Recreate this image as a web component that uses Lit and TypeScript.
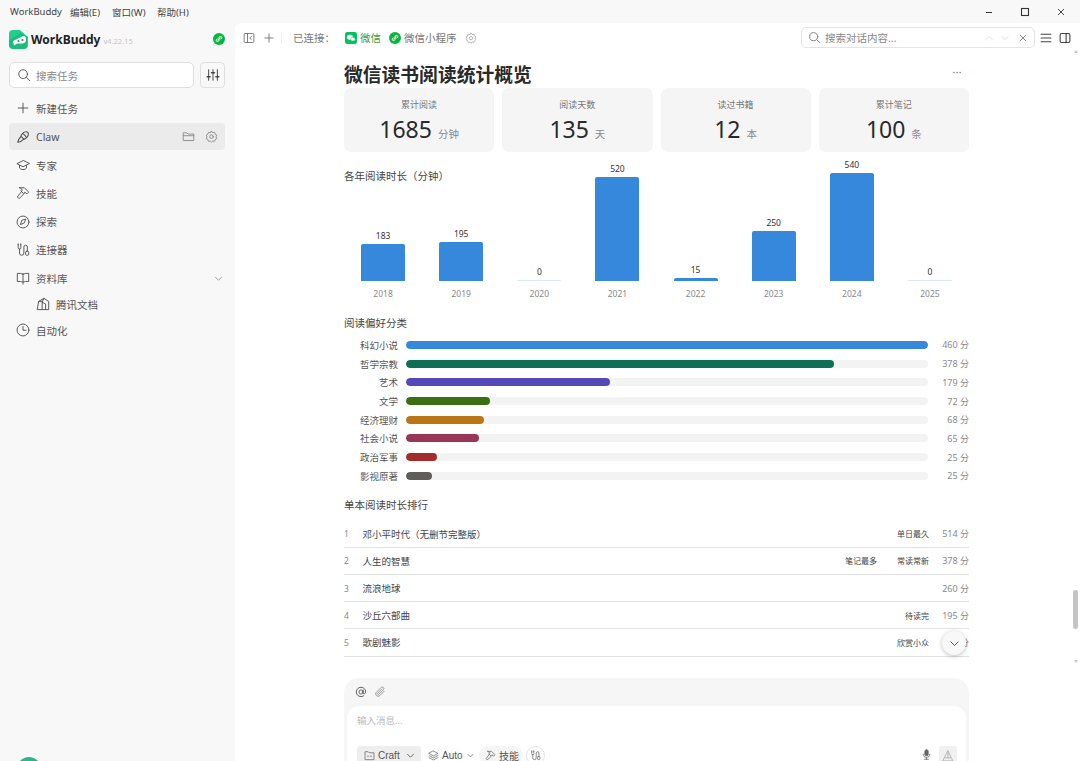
import { LitElement, html, css, svg } from 'lit';
import { customElement } from 'lit/decorators.js';

const icon = (body: unknown, cls = 'ic') => html`<svg class=${cls} viewBox="0 0 16 16" fill="none" stroke="currentColor" stroke-width="1.1" stroke-linecap="round" stroke-linejoin="round">${body}</svg>`;

const icons = {
	search: svg`<circle cx="7" cy="7" r="5"/><path d="M10.8 10.8 14.5 14.5"/>`,
	filter: svg`<path d="M3 2v12M8 2v12M13 2v12"/><path d="M1.3 10h3.4M6.3 5.5h3.4M11.3 10h3.4" stroke-width="1.6"/>`,
	plus: svg`<path d="M8 2.5v11M2.5 8h11"/>`,
	claw: svg`<path d="M2 14l1-3 2.500-3.500C6 5 8.500 2 11.500 2c2 0 3 1.500 2.500 3.500-.5 2.500-3.500 4.500-6 5.500L5 13.500z" stroke-width="1.300"/><path d="M6 7.500l3 3M8.500 4.500l3 3" stroke-width="1.300"/>`,
	folder: svg`<path d="M1.500 12.500v-9h4.500l1.500 1.500h7v7.500z"/><path d="M1.500 7h13"/>`,
	gear: svg`<path d="M8 1.500l1.500 1.800 2.300-.3.700 2.200 2 1.200-1 2.100 1 2-2 1.200-.7 2.200-2.300-.3L8 15l-1.500-1.400-2.300.3-.7-2.200-2-1.200 1-2-1-2.100 2-1.200.7-2.200 2.300.3z"/><circle cx="8" cy="8.200" r="2.200"/>`,
	cap: svg`<path d="M8 3 1 6.500 8 10l7-3.500z"/><path d="M4 8.500v3c1 1.200 2.500 1.700 4 1.700s3-.5 4-1.700v-3"/>`,
	hammer: svg`<path d="M4 2h5.500l5 5-2 2-2.500-2-1.500 1.500-3-3L7 4c-1-.8-2-1.300-3-2z"/><path d="M7 5.500 1.500 12.500l2 2 6-6"/>`,
	compass: svg`<circle cx="8" cy="8" r="6.800"/><path d="M11 5 9.500 9 5 11l1.500-4.500z"/>`,
	plug: svg`<path d="M2.500 2v3.500a1.500 1.500 0 0 0 3 0V2M4 7v4.500a2.500 2.500 0 0 0 5 0v-7a2 2 0 0 1 4 0V9"/><rect x="11" y="9.500" width="3.500" height="4.500" rx="1"/><path d="M2.500 1v1M5.500 1v1"/>`,
	book: svg`<path d="M8 3.500c-1.500-.7-4-1-6.500-.8V12c2.500-.2 5 0 6.500.7 1.500-.7 4-.9 6.500-.7V2.700C12 2.500 9.500 2.800 8 3.500zM8 3.500V15"/>`,
	chevron: svg`<path d="M3.500 6 8 10.500 12.500 6"/>`,
	doc: svg`<path d="M1.500 14 3 5l6-3.500L14.500 5v9zM9 1.500 7 6v8M3 5h4M7 6l4 2v6"/>`,
	clock: svg`<circle cx="8" cy="8" r="6.800"/><path d="M8 4v4.300h3.500"/>`,
	panel: svg`<rect x="1.500" y="2" width="13" height="12" rx="1.500"/><path d="M6 2v12M11 6 9 8l2 2"/>`,
	close: svg`<path d="M3.500 3.500l9 9M12.500 3.500l-9 9"/>`,
	up: svg`<path d="M3 10.500 8 5.500l5 5"/>`,
	menu: svg`<path d="M1.500 3h13M1.500 8h13M1.500 13h13" stroke-width="1.500"/>`,
	side: svg`<rect x="1.500" y="2" width="13" height="12" rx="2" stroke-width="1.500"/><path d="M9.500 2v12" stroke-width="1.500"/>`,
	at: svg`<circle cx="8" cy="8" r="2.800" stroke-width="1.200"/><path d="M10.800 5.500V9c0 2 3.500 2 3.500-1a6.300 6.300 0 1 0-2.500 5" stroke-width="1.200"/>`,
	clip: svg`<path d="M13.500 7 7.500 13a3.200 3.200 0 0 1-4.500-4.500l6.500-6.500a2.100 2.100 0 0 1 3 3L6.500 11a1 1 0 0 1-1.500-1.500L10.500 4"/>`,
	craft: svg`<path d="M1.500 13.500v-11h4.500l1.500 1.500h7v9.500z"/><path d="M5 9h1.500M9 9h2"/>`,
	layers: svg`<path d="M8 1.500 14.500 5 8 8.500 1.500 5zM1.500 8 8 11.500 14.500 8M1.500 11 8 14.500 14.500 11"/>`,
	mic: svg`<rect x="5.500" y="1" width="5" height="9" rx="2.500" fill="currentColor"/><path d="M3 7.500a5 5 0 0 0 10 0M8 12.500V15M5 15h6"/>`,
	send: svg`<path d="M8 1.500 14.500 14.500H1.500zM8 1.500v9M4.500 10.500h7"/>`,
};

const LINK = svg`<path d="M6.500 9.500c1.500 0 1.500-1.500 1.500-3 0-1.300 1-2 2-2s1.800.8 1.800 1.800-.7 1.500-1.300 1.700M9.500 6.500C8 6.500 8 8 8 9.500c0 1.300-1 2-2 2s-1.800-.8-1.800-1.800.7-1.500 1.300-1.700" stroke="#fff" stroke-width="1.300" fill="none" stroke-linecap="round"/>`;
const miniProgram = html`<svg class="badge" viewBox="0 0 16 16"><circle cx="8" cy="8" r="8" fill="#07b53f"/>${LINK}</svg>`;

const years = [
	{ y: 2018, v: 183 }, { y: 2019, v: 195 }, { y: 2020, v: 0 }, { y: 2021, v: 520 },
	{ y: 2022, v: 15 }, { y: 2023, v: 250 }, { y: 2024, v: 540 }, { y: 2025, v: 0 },
];

const cats = [
	{ n: '科幻小说', v: 460, p: 100, c: '#3688dd' },
	{ n: '哲学宗教', v: 378, p: 82, c: '#0f6e56' },
	{ n: '艺术', v: 179, p: 39, c: '#534ab7' },
	{ n: '文学', v: 72, p: 16, c: '#3b6d11' },
	{ n: '经济理财', v: 68, p: 15, c: '#b97516' },
	{ n: '社会小说', v: 65, p: 14, c: '#993556' },
	{ n: '政治军事', v: 25, p: 6, c: '#a32d2d' },
	{ n: '影视原著', v: 25, p: 5, c: '#5f5e5a' },
];

const books = [
	{ t: '邓小平时代（无删节完整版）', tags: ['单日最久'], v: 514 },
	{ t: '人生的智慧', tags: ['笔记最多', '常读常新'], v: 378 },
	{ t: '流浪地球', tags: [], v: 260 },
	{ t: '沙丘六部曲', tags: ['待读完'], v: 195 },
	{ t: '歌剧魅影', tags: ['欣赏小众'], v: 130 },
];

const nav = [
	{ i: icons.cap, t: '专家' },
	{ i: icons.hammer, t: '技能' },
	{ i: icons.compass, t: '探索' },
	{ i: icons.plug, t: '连接器' },
];

@customElement('app-root')
export default class AppRoot extends LitElement {
	static get styles() {
		return css`
			:host {
				display: flex;
				flex-direction: column;
				width: 1080px;
				height: 761px;
				overflow: hidden;
				position: relative;
				background: #f8f8f8;
				color: #333;
				font-family: "Noto Sans", "Noto Sans CJK SC", sans-serif;
				font-size: 10px;
			}

			svg { flex: none; display: block; }
			.ic { width: 14px; height: 14px; color: #555; }
			.ic-s { width: 11px; height: 11px; color: #888; }
			.badge { width: 12px; height: 12px; }

			.titlebar {
				height: 23px;
				flex: none;
				display: flex;
				align-items: center;
				color: #444;
				font-size: 9.5px;
				padding-left: 10px;
			}
			.titlebar .menu { width: 42px; white-space: nowrap; }
			.titlebar .menu.first { width: 60px; }
			.titlebar .menu.third { width: 45px; }
			.titlebar .menu.last { width: auto; }
			.winctl { margin-left: auto; display: flex; padding-right: 14px; gap: 26px; }
			.winctl svg { width: 10px; height: 10px; color: #333; }

			.body { flex: 1; display: flex; min-height: 0; }

			.side { width: 235px; flex: none; padding: 0 10px 0 9px; box-sizing: border-box; position: relative; }
			.brand { display: flex; align-items: center; height: 32px; }
			.logo { width: 19px; height: 19px; margin-right: 3px; }
			.brand b { font-size: 12px; font-weight: 700; color: #222; }
			.ver { font-size: 7.500px; color: #c4c4c4; margin: 3px 0 0 3px; }
			.brand .badge { margin-left: auto; }

			.find { display: flex; gap: 6px; margin-top: 7px; }
			.find .box {
				flex: 1;
				height: 26px;
				box-sizing: border-box;
				border: 1px solid #dfdfdf;
				border-radius: 5px;
				background: #fff;
				display: flex;
				align-items: center;
				padding-left: 7px;
				gap: 5px;
				color: #888;
				font-size: 10.500px;
			}
			.find .btn {
				width: 25px;
				height: 26px;
				box-sizing: border-box;
				border: 1px solid #dfdfdf;
				border-radius: 4px;
				display: grid;
				place-items: center;
			}
			.find .btn .ic { color: #444; }

			.item {
				height: 28.200px;
				display: flex;
				align-items: center;
				gap: 6px;
				padding-left: 7px;
				font-size: 10.500px;
				color: #555;
			}
			.item.new { margin-top: 6px; }
			.item.active {
				height: 27px;
				margin: 1px 0;
				background: #ebebeb;
				border-radius: 4px;
				padding-right: 7px;
			}
			.item.active .tools { margin-left: auto; display: flex; gap: 10px; }
			.item.active .tools .ic { width: 13px; height: 13px; color: #888; }
			.item.sub { height: 24px; padding-left: 27px; gap: 6px; }
			.item .more { margin-left: auto; margin-right: 1px; }
			.avatar {
				position: absolute;
				left: 17px;
				top: 734px;
				width: 24px;
				height: 24px;
				border-radius: 50%;
				background: #2bb58f;
			}

			.main {
				flex: 1;
				background: #fff;
				border-top-left-radius: 6px;
				display: flex;
				flex-direction: column;
				min-width: 0;
			}

			.toolbar {
				height: 29px;
				flex: none;
				display: flex;
				align-items: center;
				padding-left: 8px;
				color: #777;
				font-size: 10.500px;
			}
			.toolbar .ic { width: 12px; height: 12px; color: #666; }
			.toolbar .gap { width: 8px; }
			.sep { width: 1px; height: 12px; background: #eee; margin: 0 11px 0 6px; }
			.link { display: flex; align-items: center; gap: 3px; margin-left: 10px; }
			.link.wx { color: #3f9a4c; }
			.link + .link { margin-left: 8px; }
			.toolbar .gear { margin-left: 8px; color: #aaa; }
			.toolbar .gear .ic { color: #aaa; }
			.search {
				margin-left: auto;
				width: 234px;
				height: 21px;
				box-sizing: border-box;
				border: 1px solid #e4e4e4;
				border-radius: 5px;
				display: flex;
				align-items: center;
				padding: 0 6px;
				gap: 4px;
				color: #888;
			}
			.search .ic { width: 13px; height: 13px; color: #777; }
			.search .ctl { margin-left: auto; display: flex; gap: 6px; }
			.search .ctl svg { width: 10px; height: 10px; color: #ccc; }
			.search .ctl svg:last-child { color: #555; margin-left: 2px; }
			.tools-r { display: flex; gap: 7px; margin: 0 9px 0 5px; }
			.tools-r .ic { color: #444; }

			.content { padding: 0 111px 0 109px; flex: 1; min-height: 0; position: relative; }

			.head { height: 36px; display: flex; align-items: center; justify-content: space-between; padding-top: 10px; box-sizing: border-box; }
			.head h1 { margin: 0; font-size: 18.800px; font-weight: 700; color: #2a2a2a; line-height: 26px; }
			.head .dots { margin: 0 7px 6px 0; color: #666; font-size: 10px; letter-spacing: 0.500px; line-height: 10px; }

			.cards { display: grid; grid-template-columns: repeat(4, 1fr); gap: 8px; }
			.card {
				height: 64px;
				background: #f5f5f5;
				border-radius: 7px;
				display: flex;
				flex-direction: column;
				align-items: center;
				padding-top: 10px;
				box-sizing: border-box;
			}
			.card .k { font-size: 9px; color: #777; line-height: 14px; }
			.card .v { display: flex; align-items: baseline; gap: 6px; margin-top: 1px; font-size: 23px; line-height: 32px; color: #2a2a2a; }
			.card .v small { font-size: 10.500px; color: #888; }

			.chart-wrap { display: grid; margin-top: 6px; height: 142px; }
			.chart-wrap > * { grid-area: 1 / 1; }
			.sec { font-size: 10.500px; line-height: 16px; color: #444; }
			.chart-wrap .sec { margin-top: 10px; }
			.chart { display: flex; align-items: flex-end; }
			.col { flex: 1; display: flex; flex-direction: column; align-items: center; }
			.col .val { font-size: 8.500px; line-height: 12px; margin-bottom: 2.500px; color: #333; }
			.col .bar { width: 44px; background: #3688dd; border-radius: 2px 2px 0 0; }
			.col .bar.zero { background: #d7e7f8; }
			.col .year { font-size: 8.500px; line-height: 12px; margin-top: 7px; color: #888; }

			.cats { margin-top: 15px; }
			.rows { margin-top: 4.600px; }
			.row { height: 18.700px; display: flex; align-items: center; font-size: 9.500px; color: #555; }
			.row .n { width: 54px; text-align: right; margin-right: 8px; }
			.row .track { flex: 1; height: 8px; border-radius: 4px; background: #f3f3f3; overflow: hidden; }
			.row .fill { height: 100%; border-radius: 4px; }
			.row .num { width: 41px; text-align: right; color: #888; font-size: 9px; }

			.rank { margin-top: 12px; }
			.list { margin-top: 7.500px; }
			.book {
				height: 27.200px;
				box-sizing: border-box;
				border-bottom: 1px solid #e2e2e2;
				display: flex;
				align-items: center;
				font-size: 9.500px;
				color: #444;
			}
			.book .idx { width: 18.500px; font-size: 8.500px; color: #888; }
			.book .tag { font-size: 8px; color: #444; margin-left: 20px; }
			.book .tags { margin-left: auto; display: flex; }
			.book .num { width: 40px; text-align: right; color: #888; font-size: 9px; white-space: nowrap; }
			.scroll-down {
				position: absolute;
				right: 114px;
				top: 579px;
				width: 24px;
				height: 24px;
				border-radius: 50%;
				background: #f8f8f8;
				box-shadow: 0 1px 4px rgba(0, 0, 0, .25);
				display: grid;
				place-items: center;
			}
			.scroll-down .ic { width: 13px; height: 13px; color: #444; }

			.composer {
				margin-top: 21.500px;
				background: #f6f6f6;
				border-radius: 15px 15px 0 0;
				padding: 0 3px;
			}
			.composer .top { height: 28px; display: flex; align-items: center; gap: 7px; padding-left: 8px; }
			.composer .top .ic { width: 12px; height: 12px; color: #555; }
			.composer .top .ic + .ic { color: #888; }
			.input { background: #fff; border-radius: 12px 12px 0 0; padding: 8px 9px 0 10px; height: 60px; box-sizing: border-box; }
			.input .ph { font-size: 9.500px; line-height: 14px; color: #bbb; }
			.actions { display: flex; align-items: flex-start; margin-top: 18px; color: #555; font-size: 9.500px; }
			.actions .ic { width: 11px; height: 11px; color: #666; }
			.pill { height: 18px; display: flex; align-items: center; gap: 3px; box-sizing: border-box; font-family: "Liberation Sans", "Noto Sans CJK SC", sans-serif; font-size: 10px; }
			.pill.craft { width: 64px; background: #eee; border-radius: 3px; padding-left: 7px; }
			.pill.auto { margin-left: 7px; width: 44px; }
			.pill.skill { margin-left: 7px; width: 44px; background: #f5f5f5; border-radius: 9px; padding-left: 6px; }
			.pill.conn { margin-left: 3px; width: 19px; border: 1px solid #e4e4e4; border-radius: 50%; height: 19px; justify-content: center; }
			.pill .ic.down { width: 9px; height: 9px; color: #444; }
			.pill.craft .ic.down { width: 11px; height: 11px; margin-left: 2px; }
			.actions .mic { margin-left: auto; margin-right: 7px; margin-top: 3px; }
			.actions .send { width: 18px; height: 20px; background: #f0f0f0; border-radius: 3px; display: grid; place-items: center; }
			.actions .send .ic { color: #aaa; width: 12px; height: 12px; }

			.scrollbar {
				position: absolute;
				right: 2px;
				top: 50px;
				width: 5px;
				height: 613px;
				display: flex;
				flex-direction: column;
				justify-content: space-between;
				align-items: center;
			}
			.scrollbar .arrow { width: 0; height: 0; border-left: 2.500px solid transparent; border-right: 2.500px solid transparent; }
			.scrollbar .arrow.u { border-bottom: 3px solid #c8c8c8; }
			.scrollbar .arrow.d { border-top: 3px solid #c8c8c8; }
			.scrollbar .thumb {
				position: absolute;
				top: 540px;
				width: 5px;
				height: 39px;
				border-radius: 3px;
				background: #c4c4c4;
			}
		`;
	}

	render() {
		return html`
			<div class="titlebar">
				<span class="menu first">WorkBuddy</span>
				<span class="menu">编辑(E)</span>
				<span class="menu third">窗口(W)</span>
				<span class="menu last">帮助(H)</span>
				<div class="winctl">
					<svg viewBox="0 0 10 10" fill="none" stroke="currentColor"><path d="M2 5.500h6"/></svg>
					<svg viewBox="0 0 10 10" fill="none" stroke="currentColor"><rect x="1.500" y="1.500" width="7" height="7" stroke-width="1.100"/></svg>
					<svg viewBox="0 0 10 10" fill="none" stroke="currentColor" stroke-width=".9"><path d="M2 2l6 6M8 2l-6 6"/></svg>
				</div>
			</div>
			<div class="body">
				${this.renderSide()}
				<div class="main">
					${this.renderToolbar()}
					<div class="content">
						<div class="head"><h1>微信读书阅读统计概览</h1><span class="dots">···</span></div>
						${this.renderCards()}
						${this.renderChart()}
						${this.renderCats()}
						${this.renderRank()}
						${this.renderComposer()}
						<div class="scroll-down">${icon(icons.chevron)}</div>
					</div>
				</div>
			</div>
			<div class="scrollbar">
				<span class="arrow u"></span>
				<span class="thumb"></span>
				<span class="arrow d"></span>
			</div>
		`;
	}

	renderSide() {
		return html`
			<div class="side">
				<div class="brand">
					<svg class="logo" viewBox="0 0 19 19">
						<rect width="19" height="19" rx="4" fill="#22cf8a"/>
						<path d="M11 0h4a4 4 0 0 1 4 4v3z" fill="#fff"/>
						<path d="M0 10 12 3l6 4v8a4 4 0 0 1-4 4H5a5 5 0 0 1-5-5z" fill="#1bbd7e"/>
						<path d="M4 11l9-4.500c2-1 4 0 4 2v2c0 2-2 3-4 3H8l-3 2z" fill="#fff"/>
						<circle cx="9.500" cy="11" r="1.100" fill="#159a68"/><circle cx="13.500" cy="10" r="1.100" fill="#159a68"/>
					</svg>
					<b>WorkBuddy</b><span class="ver">v4.22.15</span>
					${miniProgram}
				</div>
				<div class="find">
					<div class="box">${icon(icons.search)}搜索任务</div>
					<div class="btn">${icon(icons.filter)}</div>
				</div>
				<div class="item new">${icon(icons.plus)}新建任务</div>
				<div class="item active">
					${icon(icons.claw)}Claw
					<span class="tools">${icon(icons.folder)}${icon(icons.gear)}</span>
				</div>
				${nav.map(n => html`<div class="item">${icon(n.i)}${n.t}</div>`)}
				<div class="item">${icon(icons.book)}资料库<span class="more">${icon(icons.chevron, 'ic-s')}</span></div>
				<div class="item sub">${icon(icons.doc)}腾讯文档</div>
				<div class="item">${icon(icons.clock)}自动化</div>
				<div class="avatar"></div>
			</div>
		`;
	}

	renderToolbar() {
		return html`
			<div class="toolbar">
				${icon(icons.panel)}<span class="gap"></span>${icon(icons.plus)}
				<span class="sep"></span>
				已连接：
				<span class="link wx">
					<svg class="badge" viewBox="0 0 16 16">
						<rect width="16" height="16" rx="3" fill="#07c160"/>
						<ellipse cx="6.500" cy="7" rx="4" ry="3.300" fill="#fff"/>
						<ellipse cx="10.500" cy="9.500" rx="3" ry="2.500" fill="#fff" stroke="#07c160" stroke-width=".6"/>
					</svg>
					微信
				</span>
				<span class="link">${miniProgram}微信小程序</span>
				<span class="gear">${icon(icons.gear)}</span>
				<div class="search">
					${icon(icons.search)}搜索对话内容...
					<span class="ctl">${icon(icons.up)}${icon(icons.chevron)}${icon(icons.close)}</span>
				</div>
				<div class="tools-r">${icon(icons.menu)}${icon(icons.side)}</div>
			</div>
		`;
	}

	renderCards() {
		const stats = [
			{ k: '累计阅读', v: 1685, u: '分钟' },
			{ k: '阅读天数', v: 135, u: '天' },
			{ k: '读过书籍', v: 12, u: '本' },
			{ k: '累计笔记', v: 100, u: '条' },
		];
		return html`
			<div class="cards">
				${stats.map(s => html`
					<div class="card">
						<span class="k">${s.k}</span>
						<span class="v">${s.v}<small>${s.u}</small></span>
					</div>
				`)}
			</div>
		`;
	}

	renderChart() {
		return html`
			<div class="chart-wrap">
				<div class="sec">各年阅读时长（分钟）</div>
				<div class="chart">
					${years.map(d => html`
						<div class="col">
							<span class="val">${d.v}</span>
							<div class="bar ${d.v ? '' : 'zero'}" style="height:${Math.max(1, d.v * 0.2)}px"></div>
							<span class="year">${d.y}</span>
						</div>
					`)}
				</div>
			</div>
		`;
	}

	renderCats() {
		return html`
			<div class="cats">
				<div class="sec">阅读偏好分类</div>
				<div class="rows">
					${cats.map(c => html`
						<div class="row">
							<span class="n">${c.n}</span>
							<div class="track"><div class="fill" style="width:${c.p}%;background:${c.c}"></div></div>
							<span class="num">${c.v} 分</span>
						</div>
					`)}
				</div>
			</div>
		`;
	}

	renderRank() {
		return html`
			<div class="rank">
				<div class="sec">单本阅读时长排行</div>
				<div class="list">
					${books.map((b, i) => html`
						<div class="book">
							<span class="idx">${i + 1}</span>
							<span>${b.t}</span>
							<span class="tags">${b.tags.map(t => html`<span class="tag">${t}</span>`)}</span>
							<span class="num">${b.v} 分</span>
						</div>
					`)}
				</div>
			</div>
		`;
	}

	renderComposer() {
		return html`
			<div class="composer">
				<div class="top">${icon(icons.at)}${icon(icons.clip)}</div>
				<div class="input">
					<div class="ph">输入消息...</div>
					<div class="actions">
						<span class="pill craft">${icon(icons.craft)}Craft${icon(icons.chevron, 'ic down')}</span>
						<span class="pill auto">${icon(icons.layers)}Auto${icon(icons.chevron, 'ic down')}</span>
						<span class="pill skill">${icon(icons.hammer)}技能</span>
						<span class="pill conn">${icon(icons.plug)}</span>
						<span class="mic">${icon(icons.mic)}</span>
						<span class="send">${icon(icons.send)}</span>
					</div>
				</div>
			</div>
		`;
	}
}
